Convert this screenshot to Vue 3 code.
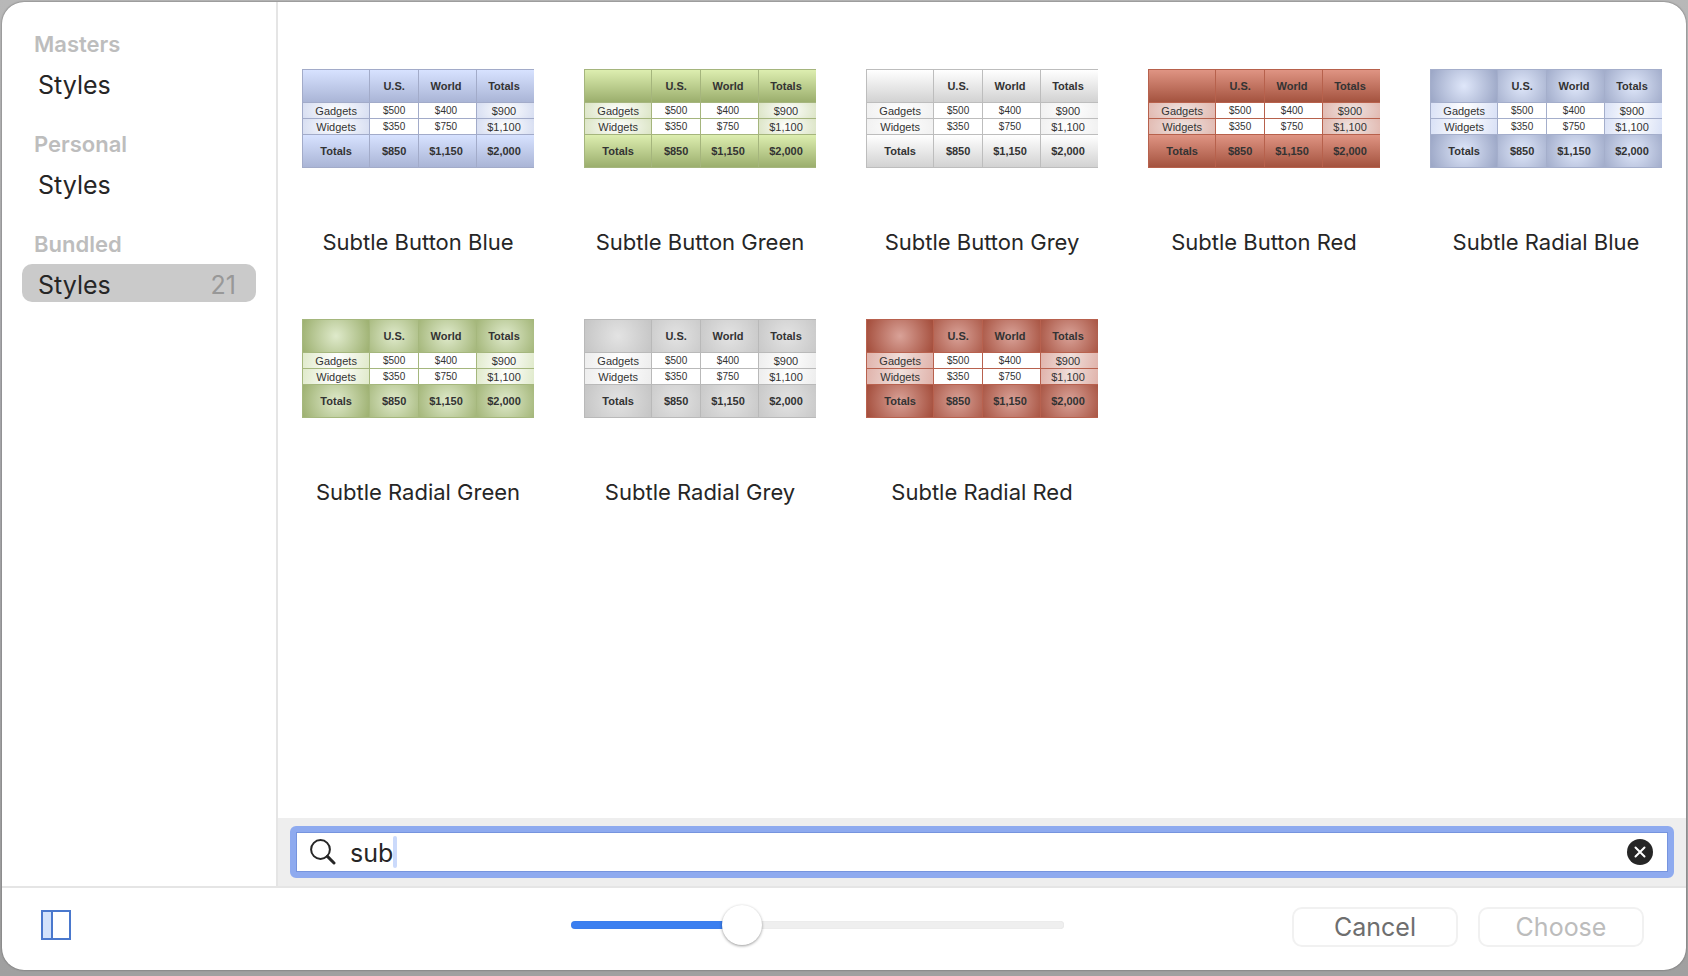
<template>
  <div class="desktop">
    <section class="chooser">
      <div class="main">
        <!-- Sidebar -->
        <nav class="sidebar">
          <div v-for="group in groups" :key="group.name" class="group">
            <h2 class="group-title">{{ group.name }}</h2>
            <button
              class="group-item"
              :class="{ active: activeGroup === group.name }"
              @click="activeGroup = group.name"
            >
              <span>Styles</span>
              <span v-if="activeGroup === group.name" class="count">{{ group.count }}</span>
            </button>
          </div>
        </nav>

        <div class="content">
          <!-- Style previews -->
          <ul class="style-grid">
            <li v-for="style in filteredStyles" :key="style.name">
              <figure class="style-card">
                <table class="preview" :class="[style.kind, style.color]">
                  <thead>
                    <tr>
                      <th></th>
                      <th>U.S.</th>
                      <th>World</th>
                      <th>Totals</th>
                    </tr>
                  </thead>
                  <tbody>
                    <tr v-for="row in rows" :key="row[0]">
                      <th>{{ row[0] }}</th>
                      <td>{{ row[1] }}</td>
                      <td>{{ row[2] }}</td>
                      <td class="sum">{{ row[3] }}</td>
                    </tr>
                  </tbody>
                  <tfoot>
                    <tr>
                      <th>Totals</th>
                      <td>$850</td>
                      <td>$1,150</td>
                      <td>$2,000</td>
                    </tr>
                  </tfoot>
                </table>
                <figcaption>{{ style.name }}</figcaption>
              </figure>
            </li>
          </ul>

          <!-- Search -->
          <div class="search-bar">
            <div class="search-field">
              <label class="search-label" for="search" aria-label="Search">
                <svg width="26" height="26" viewBox="0 0 26 26">
                  <circle cx="10.5" cy="10.5" r="9.4" fill="none" stroke="#262626" stroke-width="2" />
                  <path d="M17.4 17.4L24 24" stroke="#262626" stroke-width="3" stroke-linecap="round" />
                </svg>
              </label>
              <input id="search" v-model="query" type="text" autocomplete="off" />
              <span class="caret"></span>
              <button class="clear" aria-label="Clear" @click="query = ''">
                <svg width="26" height="26" viewBox="0 0 26 26">
                  <circle cx="13" cy="13" r="13" fill="#262626" />
                  <path d="M8.5 8.5L17.5 17.5M17.5 8.5L8.5 17.5" stroke="#fff" stroke-width="2" stroke-linecap="round" />
                </svg>
              </button>
            </div>
          </div>
        </div>
      </div>

      <!-- Footer -->
      <footer class="footer">
        <button class="toggle" aria-label="Toggle sidebar">
          <svg width="30" height="30" viewBox="0 0 30 30">
            <rect x="1" y="1" width="10" height="28" fill="#d3e2fb" />
            <path d="M1 1H29V29H1ZM11 1V29" fill="none" stroke="#4a78cd" stroke-width="2" />
          </svg>
        </button>
        <input
          v-model="size"
          class="slider"
          type="range"
          min="0"
          max="300"
          aria-label="Preview size"
          :style="{ '--fill': size / 3 + '%' }"
        />
        <div class="actions">
          <button class="action">Cancel</button>
          <button class="action" disabled>Choose</button>
        </div>
      </footer>
    </section>
  </div>
</template>

<script setup>
import { computed, ref } from 'vue'

const groups = [
  { name: 'Masters', count: 0 },
  { name: 'Personal', count: 0 },
  { name: 'Bundled', count: 21 }
]

const rows = [
  ['Gadgets', '$500', '$400', '$900'],
  ['Widgets', '$350', '$750', '$1,100']
]

const styles = [
  { name: 'Subtle Button Blue', kind: 'linear', color: 'blue' },
  { name: 'Subtle Button Green', kind: 'linear', color: 'green' },
  { name: 'Subtle Button Grey', kind: 'linear', color: 'grey' },
  { name: 'Subtle Button Red', kind: 'linear', color: 'red' },
  { name: 'Subtle Radial Blue', kind: 'radial', color: 'blue' },
  { name: 'Subtle Radial Green', kind: 'radial', color: 'green' },
  { name: 'Subtle Radial Grey', kind: 'radial', color: 'grey' },
  { name: 'Subtle Radial Red', kind: 'radial', color: 'red' }
]

const activeGroup = ref('Bundled')
const query = ref('sub')
const size = ref(100)

const filteredStyles = computed(() =>
  styles.filter((style) => style.name.toLowerCase().includes(query.value.toLowerCase()))
)
</script>

<style>
body {
  margin: 0;
}
</style>

<style scoped>
.desktop {
  box-sizing: border-box;
  min-height: 100vh;
  padding: 2px 2px 6px;
  display: flex;
  background: linear-gradient(#b8b8b8, #a9a9ad 40%, #a0a0a0);
  font-family: Inter, 'Liberation Sans', sans-serif;
  color: #262626;
}

button,
input {
  font-family: inherit;
}

.chooser {
  flex: 1;
  display: flex;
  flex-direction: column;
  border-radius: 22px;
  background: #fff;
  box-shadow: 0 0 2px #555;
  overflow: hidden;
}

.main {
  flex: 1;
  display: flex;
}

/* Sidebar */
.sidebar {
  width: 234px;
  padding: 26px 20px;
  border-right: 2px solid #e5e5e5;
}

.group {
  margin-bottom: 26px;
}

.group-title {
  margin: 0 0 4px;
  padding-left: 12px;
  font-size: 22px;
  font-weight: 600;
  line-height: 32px;
  color: #bdbdbd;
}

.group-item {
  width: 100%;
  height: 38px;
  padding: 4px 20px 0 16px;
  display: flex;
  align-items: center;
  justify-content: space-between;
  border: none;
  border-radius: 10px;
  background: none;
  font-size: 25px;
  color: #262626;
}

.group-item.active {
  background: #cacaca;
}

.count {
  color: #989898;
}

/* Preview grid */
.content {
  flex: 1;
  display: flex;
  flex-direction: column;
}

.style-grid {
  flex: 1;
  margin: 0;
  padding: 67px 24px 0;
  display: grid;
  grid-template-columns: repeat(5, 1fr);
  align-content: start;
  gap: 50px;
  list-style: none;
}

.style-card {
  height: 200px;
  margin: 0;
}

figcaption {
  margin-top: 58px;
  font-size: 22px;
  line-height: 32px;
  text-align: center;
  white-space: nowrap;
}

.preview {
  width: 100%;
  table-layout: fixed;
  border-collapse: separate;
  border-spacing: 0;
  border-bottom: 1px solid var(--line);
  font-family: 'Liberation Sans', Arial, sans-serif;
  font-size: 11px;
  line-height: 12px;
  text-align: center;
  color: #333;
}

.preview th,
.preview td {
  box-sizing: border-box;
  height: 16px;
  padding: 0;
  border-top: 1px solid var(--line);
  border-left: 1px solid var(--line);
}

.preview tr > :first-child {
  width: 29%;
}

.preview tr > :nth-child(2) {
  width: 21%;
}

.preview tr > :nth-child(n + 3) {
  padding-right: 3px;
}

.preview thead th,
.preview tfoot th,
.preview tfoot td {
  height: 33px;
  font-weight: 700;
  background: var(--head);
}

.preview tbody td {
  font-size: 10px;
  background: #fff;
}

.preview tbody th,
.preview tbody .sum {
  font-size: 11px;
  font-weight: 400;
  background: var(--side);
}

.linear {
  --head: linear-gradient(var(--light), var(--dark));
  --side: radial-gradient(ellipse 60% 140% at center, #fff, var(--tint));
}

.radial {
  --head: radial-gradient(circle closest-side, var(--center), var(--edge) 220%);
  --side: linear-gradient(100deg, var(--tint), #fff 50%, var(--tint));
}

.linear.blue {
  --line: #a2abc9;
  --light: #d7e2ff;
  --dark: #aab5d6;
  --tint: #d2daf0;
}

.linear.green {
  --line: #a5b57d;
  --light: #ddeeb0;
  --dark: #9bae6d;
  --tint: #d8e2c0;
}

.linear.grey {
  --line: #bdbdbd;
  --light: #fff;
  --dark: #d2d2d2;
  --tint: #efefef;
}

.linear.red {
  --line: #b7614c;
  --light: #df9483;
  --dark: #a4533f;
  --tint: #e0b5ac;
  --side: radial-gradient(ellipse 60% 140% at center, #efe4e1, var(--tint));
}

.radial.blue {
  --line: #a4aecb;
  --center: #dfe7fa;
  --edge: #9da8c7;
  --tint: #d9e1f6;
}

.radial.green {
  --line: #a5b77d;
  --center: #dfeacb;
  --edge: #9fb273;
  --tint: #e0eacb;
}

.radial.grey {
  --line: #b9b9b9;
  --center: #e3e3e3;
  --edge: #c6c6c6;
  --tint: #ededed;
}

.radial.red {
  --line: #b8614e;
  --center: #d9a298;
  --edge: #a54f3d;
  --tint: #e0b3ab;
  --side: linear-gradient(100deg, var(--tint), #f0dfdb 50%, var(--tint));
}

/* Search */
.search-bar {
  padding: 8px 12px;
  background: #eee;
}

.search-field {
  box-sizing: border-box;
  height: 52px;
  padding: 0 15px 0 14px;
  display: flex;
  align-items: center;
  border: 6px solid #8eaaef;
  border-radius: 6px;
  background: #fff;
  box-shadow: inset 0 0 0 1px #7694de;
}

.search-label {
  height: 26px;
  margin-right: 14px;
}

.search-field input {
  field-sizing: content;
  min-width: 4px;
  max-width: 80%;
  padding: 2px 0 0;
  border: none;
  outline: none;
  background: none;
  font-size: 25px;
  line-height: 32px;
  color: #262626;
}

.caret {
  width: 4px;
  height: 32px;
  border-radius: 2px;
  background: #cbdafb;
}

.clear,
.toggle {
  padding: 0;
  display: flex;
  border: none;
  background: none;
}

.clear {
  margin-left: auto;
}

/* Footer */
.footer {
  padding: 0 42px 8px 39px;
  height: 74px;
  display: grid;
  grid-template-columns: 43fr 40fr 47fr;
  align-items: center;
  border-top: 2px solid #e5e5e5;
}

.slider {
  appearance: none;
  width: 100%;
  height: 40px;
  margin: 0;
  background: none;
}

.slider::-webkit-slider-runnable-track {
  height: 8px;
  border-radius: 4px;
  background: linear-gradient(to right, #3b7ff0 var(--fill), #efefef var(--fill));
  box-shadow: inset 0 0 1px rgba(0, 0, 0, 0.15);
}

.slider::-webkit-slider-thumb {
  appearance: none;
  width: 40px;
  height: 40px;
  margin-top: -16px;
  border-radius: 50%;
  background: #fff;
  box-shadow: 0 1px 3px rgba(0, 0, 0, 0.4);
}

.actions {
  padding-top: 4px;
  display: flex;
  justify-content: flex-end;
  gap: 20px;
}

.action {
  width: 166px;
  height: 40px;
  padding: 0;
  border: 2px solid #f1f1f1;
  border-radius: 10px;
  background: #fff;
  font-size: 25px;
  color: #6e6e6e;
}

.action:disabled {
  color: #bcbcbc;
}
</style>
